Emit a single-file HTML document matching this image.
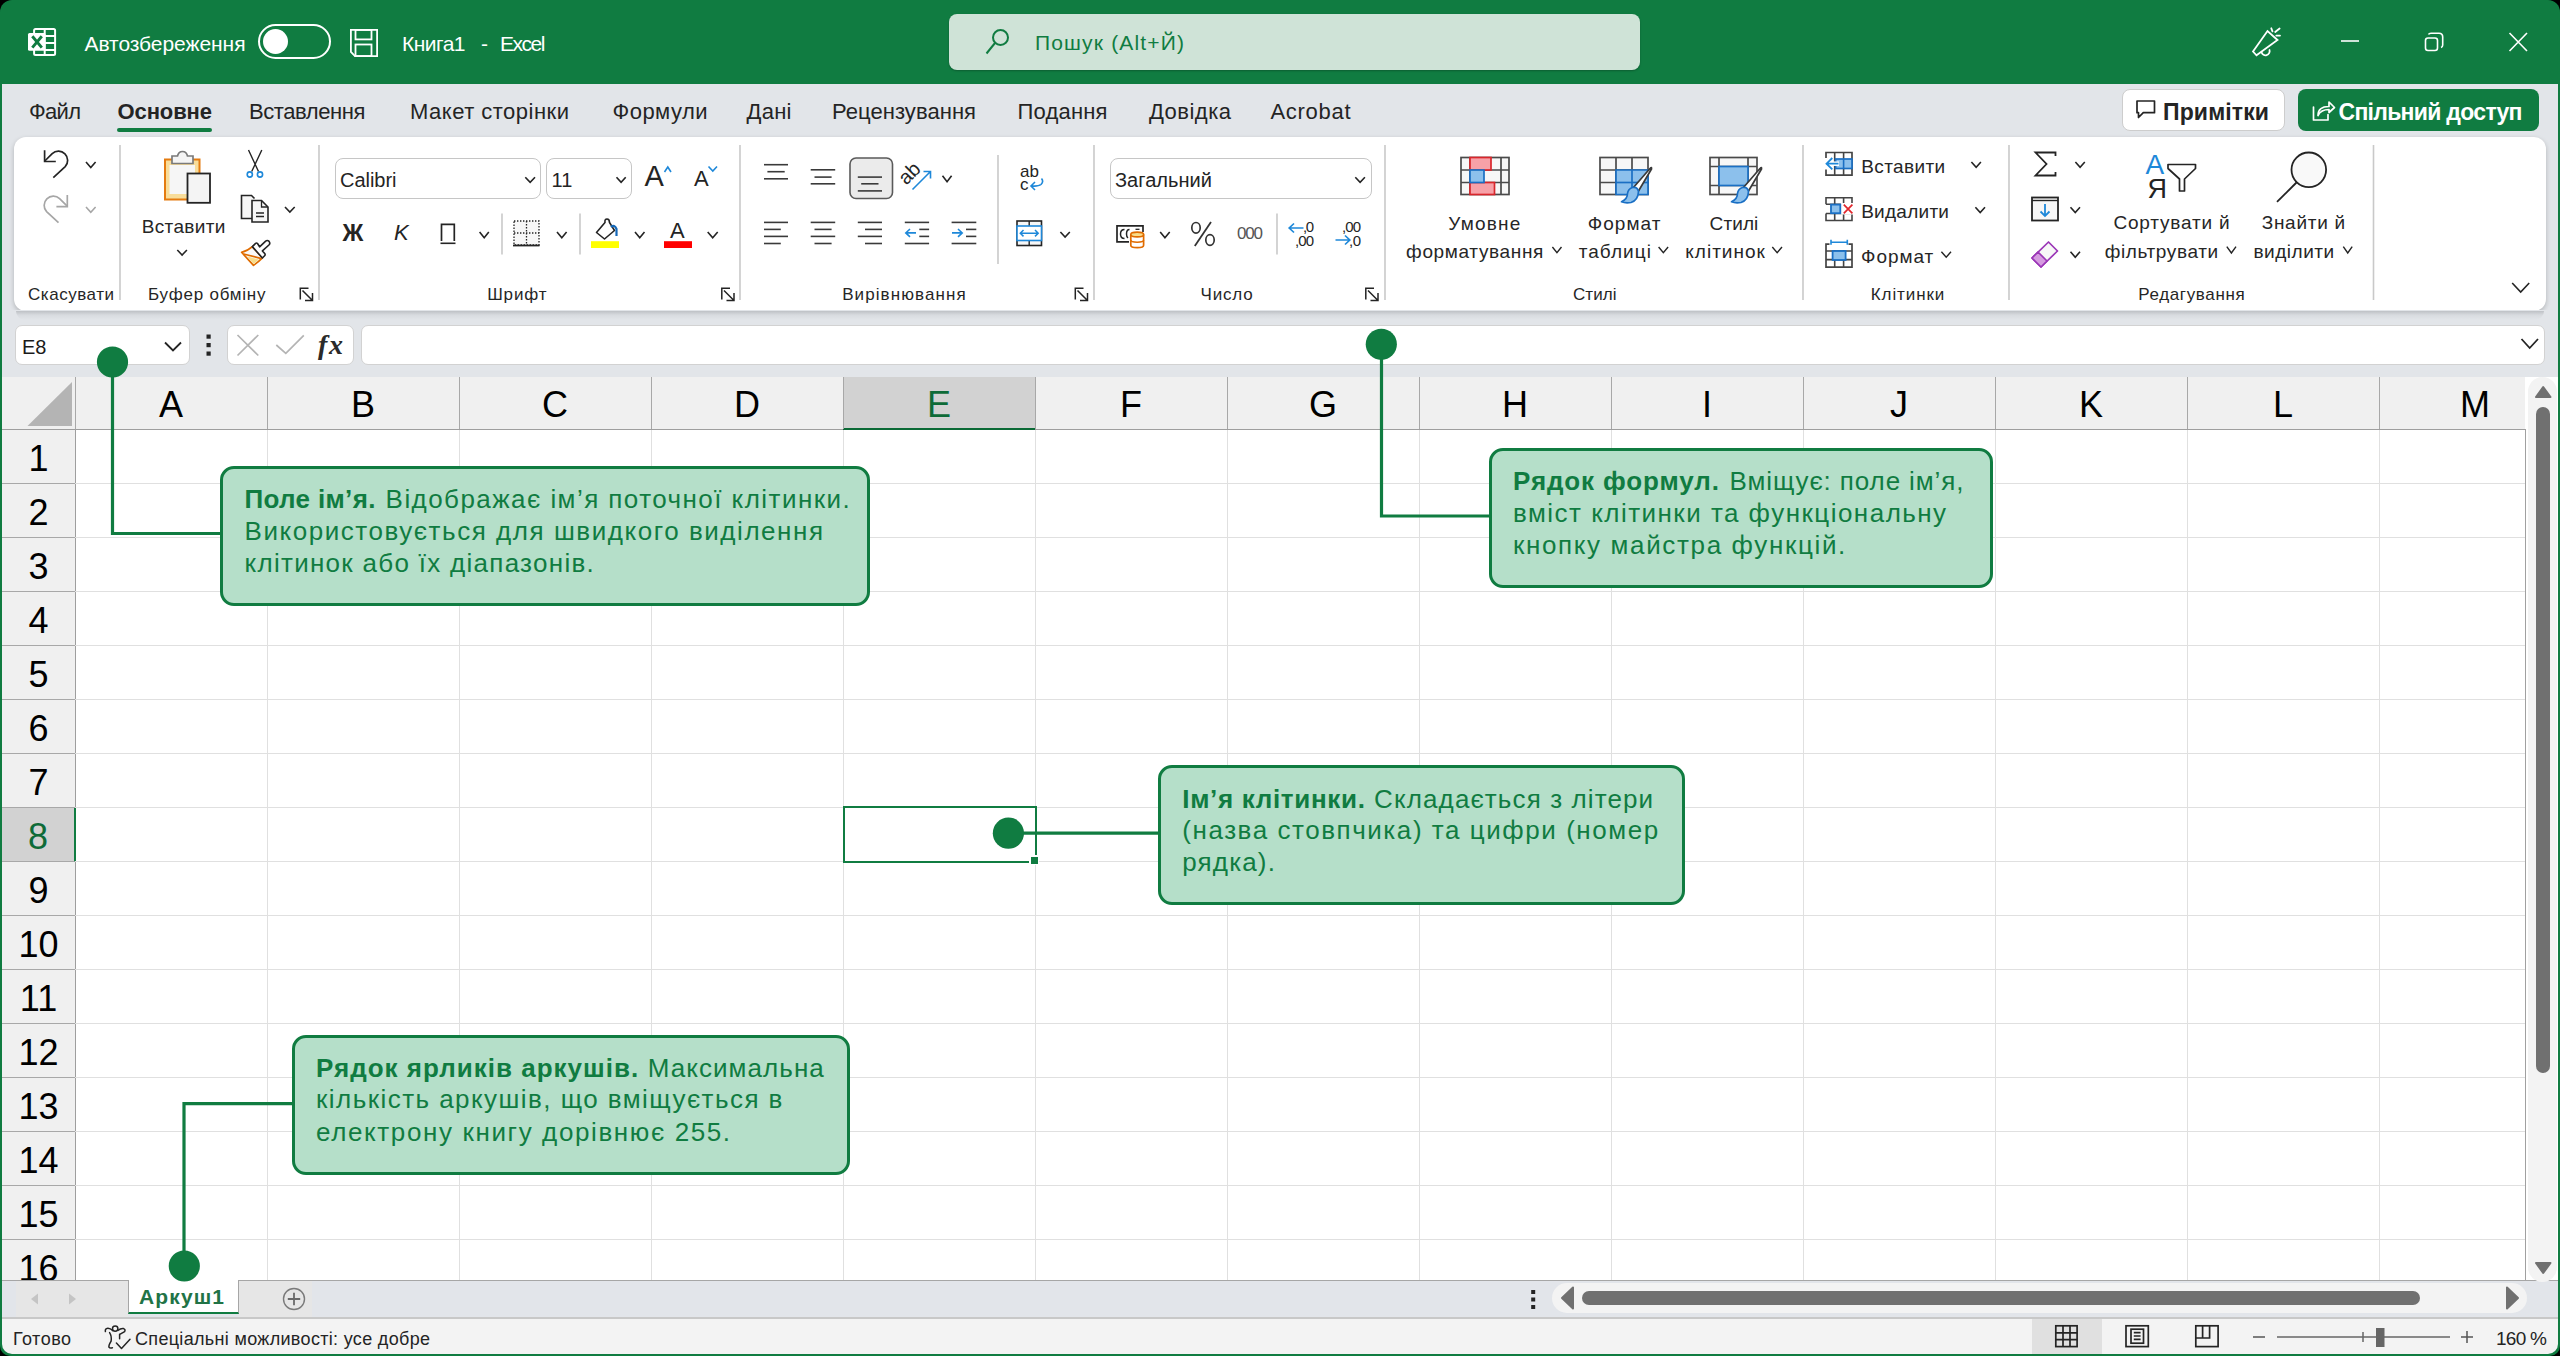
<!DOCTYPE html>
<html><head><meta charset="utf-8">
<style>
*{box-sizing:border-box;margin:0;padding:0}
html,body{width:2560px;height:1356px;overflow:hidden;background:#000;font-family:"Liberation Sans",sans-serif}
#win{position:absolute;left:0;top:0;width:2560px;height:1356px;background:#107C41;border-radius:12px 12px 10px 10px;overflow:hidden}
.a{position:absolute}
.t{position:absolute;white-space:nowrap;line-height:1}
svg{position:absolute;overflow:visible}
#tabbar{left:2px;top:84px;width:2556px;height:226px;background:#E2E5E9}
#ribbon{left:14px;top:137px;width:2532px;height:173.5px;background:#fff;border-radius:12px;box-shadow:0 2px 5px rgba(0,0,0,.22)}
#fbar{left:2px;top:310px;width:2556px;height:67px;background:#E2E5E9}
.box{position:absolute;background:#fff;border:1px solid #D2D2D2;border-radius:7px}
#grid{left:2px;top:377px;width:2556px;height:903px;background:#fff}
#sheetbar{left:2px;top:1280px;width:2556px;height:39px;background:#E2E5EA;border-top:1px solid #A6A6A6}
#status{left:2px;top:1317px;width:2556px;height:37px;background:#F3F3F3;border-top:2px solid #C8C8C8;border-radius:0 0 10px 10px}
.ch{position:absolute;top:377px;height:53px;background:#F0F0F0;border-bottom:1px solid #9E9E9E;font-size:36px;color:#000;text-align:center;line-height:56px}
.ch.sel{background:#D2D2D2;color:#0E6B38;border-bottom:2px solid #0B6A36}
.rh{position:absolute;left:2px;width:74px;height:54px;background:#F0F0F0;border-bottom:1px solid #A8A8A8;border-right:1px solid #9E9E9E;font-size:36px;color:#000;text-align:center;line-height:57px}
.rh.sel{background:#D2D2D2;color:#0E6B38;border-right:2px solid #107C41}
.vl{position:absolute;top:430px;width:1px;height:850px;background:#E0E0E0}
.vh{position:absolute;top:377px;width:1px;height:52px;background:#A8A8A8}
.hl{position:absolute;left:75px;height:1px;width:2450px;background:#E0E0E0}
.callout{position:absolute;background:#B5DFC9;border:3px solid #107C41;border-radius:13px;color:#107C41;font-size:24px;line-height:32px;padding:14px 0 0 21px}
.callout b{font-weight:bold}
.dot{position:absolute;width:31px;height:31px;border-radius:50%;background:#107C41}
.ln{position:absolute;background:#107C41}

</style></head><body>
<div id="win">
<svg style="left:0;top:0" width="1" height="1">
 <g fill="none" stroke="#fff" stroke-width="2">
  <rect x="34.1" y="28.9" width="21" height="26.2" rx="1.5"/>
  <line x1="44.7" y1="28.9" x2="44.7" y2="55.1"/>
  <line x1="44.7" y1="35.9" x2="55.1" y2="35.9"/>
  <line x1="44.7" y1="42.9" x2="55.1" y2="42.9"/>
  <line x1="44.7" y1="49.9" x2="55.1" y2="49.9"/>
 </g>
 <rect x="28" y="33" width="17.5" height="17.8" rx="1.5" fill="#fff"/>
 <path d="M32.3 36.3 L41.8 47.6 M41.8 36.3 L32.3 47.6" stroke="#107C41" stroke-width="2.9"/>
 <rect x="259" y="25" width="71" height="33" rx="16.5" fill="none" stroke="#fff" stroke-width="2"/>
 <circle cx="275.5" cy="41.5" r="12.5" fill="#fff"/>
 <g fill="none" stroke="#fff" stroke-width="1.8">
  <path d="M350.9 29.9 H377.1 V56.1 H355 L350.9 52 Z"/>
  <rect x="355.5" y="29.9" width="16" height="9.5"/>
  <rect x="355.5" y="44.5" width="16" height="11.6"/>
 </g>
 <g fill="none" stroke="#fff" stroke-width="1.8" stroke-linecap="round">
  <path d="M2253 51.5 L2267.5 31 L2277.5 40 L2256.5 55.3 Z"/>
  <path d="M2261.5 52.3 A4 4 0 0 0 2269.5 50"/>
  <path d="M2271.3 28.3 L2272.5 31.3 M2275.2 32 L2279.6 28.5 M2276.3 35.6 L2280 35.6"/>
 </g>
 <g fill="none" stroke="#fff" stroke-width="1.6">
  <line x1="2341" y1="41" x2="2359" y2="41"/>
  <rect x="2425.5" y="38" width="12" height="12.5" rx="2.5"/>
  <path d="M2428.5 34.5 Q2429 33.3 2431 33.3 H2439 Q2442.7 33.3 2442.7 37 V45 Q2442.7 47 2441 47.5"/>
  <path d="M2509.5 33 L2527 51 M2527 33 L2509.5 51"/>
 </g>
</svg>

<div class="t" style="left:84.5px;top:32.72px;font-size:21px;color:#fff;letter-spacing:-0.062px;">Автозбереження</div>
<div class="t" style="left:402px;top:32.72px;font-size:21px;color:#fff;letter-spacing:-0.525px;">Книга1</div>
<div class="t" style="left:481px;top:32.72px;font-size:21px;color:#fff;">-</div>
<div class="t" style="left:500px;top:32.72px;font-size:21px;color:#fff;letter-spacing:-1.465px;">Excel</div>
<div class="a" style="left:949px;top:14px;width:691px;height:56px;background:#CFE3D7;border-radius:8px;box-shadow:0 1px 2px rgba(0,0,0,.25)"></div>
<svg style="left:0;top:0" width="1" height="1">
 <g fill="none" stroke="#107C41" stroke-width="2">
  <circle cx="1000.5" cy="37.5" r="7.5"/>
  <line x1="995" y1="43" x2="986.5" y2="53.5"/>
 </g>
</svg>

<div class="t" style="left:1035px;top:32.22px;font-size:21px;color:#107C41;letter-spacing:1.167px;">Пошук (Alt+Й)</div>

<div id="tabbar" class="a"></div>
<div class="t" style="left:29px;top:101.38px;font-size:22px;color:#242424;letter-spacing:-0.698px;">Файл</div>
<div class="t" style="left:117.5px;top:101.38px;font-size:22px;color:#242424;letter-spacing:-0.104px;font-weight:bold;">Основне</div>
<div class="t" style="left:249px;top:101.38px;font-size:22px;color:#242424;letter-spacing:-0.413px;">Вставлення</div>
<div class="t" style="left:410px;top:101.38px;font-size:22px;color:#242424;letter-spacing:0.490px;">Макет сторінки</div>
<div class="t" style="left:612.5px;top:101.38px;font-size:22px;color:#242424;letter-spacing:0.464px;">Формули</div>
<div class="t" style="left:746.5px;top:101.38px;font-size:22px;color:#242424;letter-spacing:0.276px;">Дані</div>
<div class="t" style="left:832px;top:101.38px;font-size:22px;color:#242424;letter-spacing:0.053px;">Рецензування</div>
<div class="t" style="left:1017.5px;top:101.38px;font-size:22px;color:#242424;letter-spacing:0.190px;">Подання</div>
<div class="t" style="left:1149px;top:101.38px;font-size:22px;color:#242424;letter-spacing:0.477px;">Довідка</div>
<div class="t" style="left:1270.5px;top:101.38px;font-size:22px;color:#242424;letter-spacing:0.695px;">Acrobat</div>
<div class="a" style="left:117px;top:128px;width:95px;height:4px;border-radius:2px;background:#107C41"></div>
<div class="a" style="left:2122px;top:89px;width:163px;height:42px;background:#fff;border:1.5px solid #CDCDCD;border-radius:8px"></div>
<div class="a" style="left:2298px;top:89px;width:241px;height:42px;background:#107C41;border-radius:8px"></div>
<svg style="left:0;top:0" width="1" height="1"><g fill="none" stroke="#242424" stroke-width="1.7" stroke-linejoin="round">
<path d="M2137 101 H2154.5 V112.7 H2143.3 L2138.5 117.5 V112.7 H2137 Z"/></g>
<g fill="none" stroke="#fff" stroke-width="1.7" stroke-linejoin="round" stroke-linecap="round">
<path d="M2313.5 107 V120 H2328 V114.5"/><path d="M2318 115.5 Q2318 106.5 2329 106.5 V102 L2334.5 107.5 L2329 112.5 V109.5 Q2321 109.5 2318 115.5 Z"/></g></svg>
<div class="t" style="left:2163px;top:100.53px;font-size:23px;color:#242424;letter-spacing:0.136px;font-weight:bold;">Примітки</div>
<div class="t" style="left:2338.5px;top:100.53px;font-size:23px;color:#fff;letter-spacing:-0.705px;font-weight:bold;">Спільний доступ</div>
<div id="ribbon" class="a"></div>
<svg style="left:0;top:0" width="1" height="1">
<line x1="120" y1="145" x2="120" y2="300" stroke="#C9C9C9" stroke-width="1.6"/>
<line x1="319" y1="145" x2="319" y2="300" stroke="#C9C9C9" stroke-width="1.6"/>
<line x1="740" y1="145" x2="740" y2="300" stroke="#C9C9C9" stroke-width="1.6"/>
<line x1="1094" y1="145" x2="1094" y2="300" stroke="#C9C9C9" stroke-width="1.6"/>
<line x1="1385" y1="145" x2="1385" y2="300" stroke="#C9C9C9" stroke-width="1.6"/>
<line x1="1803" y1="145" x2="1803" y2="300" stroke="#C9C9C9" stroke-width="1.6"/>
<line x1="2009" y1="145" x2="2009" y2="300" stroke="#C9C9C9" stroke-width="1.6"/>
<line x1="2373.5" y1="145" x2="2373.5" y2="300" stroke="#C9C9C9" stroke-width="1.6"/>
<line x1="502" y1="213.5" x2="502" y2="254.5" stroke="#C9C9C9" stroke-width="1.6"/>
<line x1="580" y1="213.5" x2="580" y2="254.5" stroke="#C9C9C9" stroke-width="1.6"/>
<line x1="998" y1="155" x2="998" y2="264" stroke="#C9C9C9" stroke-width="1.6"/>
<line x1="1277" y1="213.5" x2="1277" y2="254.5" stroke="#C9C9C9" stroke-width="1.6"/>
<path d="M300.3 299.5 V288.3 H308.5" fill="none" stroke="#242424" stroke-width="1.5"/><path d="M302.5 290.5 L312.0 300.0 M312.5 293.0 V300.5 H305.0" fill="none" stroke="#242424" stroke-width="1.5"/>
<path d="M721.8 299.5 V288.3 H730" fill="none" stroke="#242424" stroke-width="1.5"/><path d="M724 290.5 L733.5 300.0 M734 293.0 V300.5 H726.5" fill="none" stroke="#242424" stroke-width="1.5"/>
<path d="M1075.3 299.5 V288.3 H1083.5" fill="none" stroke="#242424" stroke-width="1.5"/><path d="M1077.5 290.5 L1087.0 300.0 M1087.5 293.0 V300.5 H1080.0" fill="none" stroke="#242424" stroke-width="1.5"/>
<path d="M1365.8 299.5 V288.3 H1374" fill="none" stroke="#242424" stroke-width="1.5"/><path d="M1368 290.5 L1377.5 300.0 M1378 293.0 V300.5 H1370.5" fill="none" stroke="#242424" stroke-width="1.5"/>
<path d="M44.6 150.3 V161.5 H55.8" fill="none" stroke="#242424" stroke-width="1.7"/>
<path d="M44.8 161 L52.2 153.6 A9.2 9.2 0 0 1 65.2 166.6 L53.3 177.6" fill="none" stroke="#242424" stroke-width="1.7"/>
<path d="M86 162 L90.8 167.5 L95.6 162" fill="none" stroke="#242424" stroke-width="1.6"/>
<path d="M67.3 195.1 V206.6 H56.4" fill="none" stroke="#A6A6A6" stroke-width="1.7"/>
<path d="M67.2 206.2 L59.6 198.6 A9.2 9.2 0 0 0 46.6 211.6 L58.5 222.6" fill="none" stroke="#A6A6A6" stroke-width="1.7"/>
<path d="M86 207 L90.8 212.3 L95.6 207" fill="none" stroke="#A6A6A6" stroke-width="1.6"/>
<rect x="165" y="159.5" width="34.5" height="40" fill="#F8DD9A" stroke="#E47B10" stroke-width="2"/>
<rect x="169.5" y="165" width="25.5" height="29" fill="#F6F6F6"/>
<path d="M172 163.5 V156 H177.5 Q178.5 151.5 182.5 151.5 Q186.5 151.5 187.5 156 H193 V163.5 Z" fill="#F4F4F4" stroke="#7A7A7A" stroke-width="1.7"/>
<rect x="187.5" y="173.5" width="22.5" height="29.3" fill="#F4F4F4" stroke="#242424" stroke-width="1.8"/>
<path d="M177.3 250 L182.10000000000002 255 L186.9 250" fill="none" stroke="#242424" stroke-width="1.6"/>
<path d="M248.5 150 L258.5 171.5 M261.8 150 L251.7 171.5" fill="none" stroke="#242424" stroke-width="1.4"/>
<circle cx="249.8" cy="174.5" r="2.6" fill="none" stroke="#1E88D9" stroke-width="1.6"/><circle cx="260" cy="174.5" r="2.6" fill="none" stroke="#1E88D9" stroke-width="1.6"/>
<path d="M252 218.5 H241.5 V195.5 H251.5 L254.5 198.5" fill="#F6F6F6" stroke="#242424" stroke-width="1.6"/>
<path d="M252 200.5 H261.5 L268 207 V222 H252 Z" fill="#F6F6F6" stroke="#242424" stroke-width="1.6"/>
<path d="M261.5 200.5 V207 H268 M256 213 H264 M256 216.5 H264" fill="none" stroke="#242424" stroke-width="1.3"/>
<path d="M285 207 L289.85 212 L294.7 207" fill="none" stroke="#242424" stroke-width="1.6"/>
<path d="M252.3 246.6 Q247.5 251 241.6 252.3 L253.5 265.4 Q258.5 261.8 262.4 257.8 Z" fill="#F9F9F9" stroke="#E06C00" stroke-width="1.7" stroke-linejoin="round"/>
<path d="M247.3 256.6 L258.8 259.6 L253.6 264 Z" fill="#F8DD8A"/>
<path d="M243.6 254 L261.5 258.6" fill="none" stroke="#E06C00" stroke-width="1.7"/>
<path d="M252.3 246.6 L255.6 243.4 Q256.6 242.6 257.5 243.5 L259.6 246.8 L265.4 241.3 Q267.3 239.6 269.1 241.4 Q270.6 243.3 268.9 245 L262.4 250.9 L264.7 253.6 Q265.6 254.8 264.6 255.8 L262.4 258 Z" fill="#fff" stroke="#242424" stroke-width="1.6" stroke-linejoin="round"/>
</svg>
<div class="t" style="left:28px;top:285.91px;font-size:17px;color:#262626;letter-spacing:0.531px;">Скасувати</div>
<div class="t" style="left:148px;top:285.91px;font-size:17px;color:#262626;letter-spacing:0.783px;">Буфер обміну</div>
<div class="t" style="left:141.8px;top:216.62px;font-size:19px;color:#262626;letter-spacing:0.319px;">Вставити</div>
<div class="t" style="left:487.2px;top:285.91px;font-size:17px;color:#262626;letter-spacing:0.841px;">Шрифт</div>
<div class="t" style="left:842.2px;top:286.11px;font-size:17px;color:#262626;letter-spacing:1.089px;">Вирівнювання</div>
<div class="t" style="left:1200.5px;top:285.91px;font-size:17px;color:#262626;letter-spacing:0.848px;">Число</div>
<div class="t" style="left:1573px;top:285.91px;font-size:17px;color:#262626;letter-spacing:0.059px;">Стилі</div>
<div class="t" style="left:1870.8px;top:286.11px;font-size:17px;color:#262626;letter-spacing:0.900px;">Клітинки</div>
<div class="t" style="left:2138.2px;top:285.81px;font-size:17px;color:#262626;letter-spacing:0.647px;">Редагування</div>
<div class="a" style="left:335px;top:157.5px;width:206px;height:41px;border:1.6px solid #C6C6C6;border-radius:8px;background:#fff"></div>
<div class="a" style="left:546px;top:157.5px;width:86px;height:41px;border:1.6px solid #C6C6C6;border-radius:8px;background:#fff"></div>
<div class="a" style="left:1110px;top:157.5px;width:261.5px;height:41px;border:1.6px solid #C6C6C6;border-radius:8px;background:#fff"></div>
<div class="t" style="left:340px;top:169.97px;font-size:20px;color:#242424;letter-spacing:-0.031px;">Calibri</div>
<div class="t" style="left:551.5px;top:169.97px;font-size:20px;color:#242424;">11</div>
<div class="t" style="left:1115px;top:169.97px;font-size:20px;color:#242424;letter-spacing:0.041px;">Загальний</div>
<div class="t" style="left:644.5px;top:162.35px;font-size:29px;color:#242424;">A</div>
<div class="t" style="left:694px;top:168.28px;font-size:22px;color:#242424;">A</div>
<svg style="left:0;top:0" width="1" height="1">
<path d="M525.3 177.2 L530.15 182.4 L535 177.2" fill="none" stroke="#242424" stroke-width="1.6"/>
<path d="M616.5 177.2 L621.1 182.4 L625.7 177.2" fill="none" stroke="#242424" stroke-width="1.6"/>
<path d="M1355.3 177.2 L1360.1 182.3 L1364.9 177.2" fill="none" stroke="#242424" stroke-width="1.6"/>
<path d="M664.5 172 L667.8 167 L671 172" fill="none" stroke="#1E88D9" stroke-width="1.6"/>
<path d="M708.5 166.5 L712.8 171 L717 166.5" fill="none" stroke="#1E88D9" stroke-width="1.6"/>
<path d="M479.6 232 L484.20000000000005 237.8 L488.8 232" fill="none" stroke="#242424" stroke-width="1.6"/>
<path d="M557 232 L561.8 237.8 L566.6 232" fill="none" stroke="#242424" stroke-width="1.6"/>
<path d="M635 232 L639.75 237.8 L644.5 232" fill="none" stroke="#242424" stroke-width="1.6"/>
<path d="M707.7 232 L712.7 237.8 L717.7 232" fill="none" stroke="#242424" stroke-width="1.6"/>
<path d="M441.5 241 V224.3 H454.3 V241" fill="none" stroke="#242424" stroke-width="1.7"/>
<line x1="440.5" y1="243.3" x2="455.5" y2="243.3" stroke="#242424" stroke-width="1.6"/>
<rect x="514" y="221" width="25" height="24" fill="#F7F7F7" stroke="#242424" stroke-width="1.3" stroke-dasharray="1.4 1.6"/>
<path d="M526.5 221 V245 M514 233 H539" fill="none" stroke="#242424" stroke-width="1.3" stroke-dasharray="1.4 1.6"/>
<line x1="513" y1="245.5" x2="539.5" y2="245.5" stroke="#242424" stroke-width="1.8"/>
<path d="M596.5 232.5 L605 222.5 Q604.5 219 607 219 Q609.5 219 609.5 222.5 L614.5 230.5 L604.5 239 Z" fill="#fff" stroke="#242424" stroke-width="1.6" stroke-linejoin="round"/>
<path d="M611 227 Q614.5 224 616.5 229 V236" fill="none" stroke="#1568B8" stroke-width="2.2"/>
<rect x="591" y="241.2" width="28" height="6.8" fill="#FFFF00"/>
<rect x="664" y="241.2" width="28" height="6.8" fill="#FF0000"/>
<line x1="764" y1="164.7" x2="788" y2="164.7" stroke="#3A3A3A" stroke-width="1.6"/><line x1="767.4" y1="171.7" x2="784.7" y2="171.7" stroke="#3A3A3A" stroke-width="1.6"/><line x1="764" y1="178.8" x2="788" y2="178.8" stroke="#3A3A3A" stroke-width="1.6"/>
<line x1="810.7" y1="169.8" x2="835.2" y2="169.8" stroke="#3A3A3A" stroke-width="1.6"/><line x1="814.5" y1="177.1" x2="831.6" y2="177.1" stroke="#3A3A3A" stroke-width="1.6"/><line x1="810.7" y1="183.8" x2="835.2" y2="183.8" stroke="#3A3A3A" stroke-width="1.6"/>
<rect x="850" y="158" width="42.5" height="40.5" rx="6" fill="#EBEBEB" stroke="#5A5A5A" stroke-width="1.6"/>
<line x1="857.8" y1="177.1" x2="882" y2="177.1" stroke="#3A3A3A" stroke-width="1.6"/><line x1="861.2" y1="183.8" x2="878.5" y2="183.8" stroke="#3A3A3A" stroke-width="1.6"/><line x1="857.8" y1="190.9" x2="882" y2="190.9" stroke="#3A3A3A" stroke-width="1.6"/>
<line x1="764" y1="222.4" x2="788" y2="222.4" stroke="#3A3A3A" stroke-width="1.6"/><line x1="764" y1="229.4" x2="780.8" y2="229.4" stroke="#3A3A3A" stroke-width="1.6"/><line x1="764" y1="236.4" x2="788" y2="236.4" stroke="#3A3A3A" stroke-width="1.6"/><line x1="764" y1="243.5" x2="780.8" y2="243.5" stroke="#3A3A3A" stroke-width="1.6"/>
<line x1="810.7" y1="222.4" x2="835.2" y2="222.4" stroke="#3A3A3A" stroke-width="1.6"/><line x1="814.5" y1="229.4" x2="831.6" y2="229.4" stroke="#3A3A3A" stroke-width="1.6"/><line x1="810.7" y1="236.4" x2="835.2" y2="236.4" stroke="#3A3A3A" stroke-width="1.6"/><line x1="814.5" y1="243.5" x2="831.6" y2="243.5" stroke="#3A3A3A" stroke-width="1.6"/>
<line x1="857.8" y1="222.4" x2="882" y2="222.4" stroke="#3A3A3A" stroke-width="1.6"/><line x1="865" y1="229.4" x2="882" y2="229.4" stroke="#3A3A3A" stroke-width="1.6"/><line x1="857.8" y1="236.4" x2="882" y2="236.4" stroke="#3A3A3A" stroke-width="1.6"/><line x1="865" y1="243.5" x2="882" y2="243.5" stroke="#3A3A3A" stroke-width="1.6"/>
<line x1="904.8" y1="222.4" x2="929.1" y2="222.4" stroke="#3A3A3A" stroke-width="1.6"/><line x1="919.3" y1="229.4" x2="929.1" y2="229.4" stroke="#3A3A3A" stroke-width="1.6"/><line x1="919.3" y1="236.4" x2="929.1" y2="236.4" stroke="#3A3A3A" stroke-width="1.6"/><line x1="904.8" y1="243.5" x2="929.1" y2="243.5" stroke="#3A3A3A" stroke-width="1.6"/>
<line x1="951.6" y1="222.4" x2="976.3" y2="222.4" stroke="#3A3A3A" stroke-width="1.6"/><line x1="966" y1="229.4" x2="976.3" y2="229.4" stroke="#3A3A3A" stroke-width="1.6"/><line x1="966" y1="236.4" x2="976.3" y2="236.4" stroke="#3A3A3A" stroke-width="1.6"/><line x1="951.6" y1="243.5" x2="976.3" y2="243.5" stroke="#3A3A3A" stroke-width="1.6"/>
<path d="M916 232.9 H906 M910 229 L905.8 232.9 L910 236.8" fill="none" stroke="#1E88D9" stroke-width="1.6"/>
<path d="M952 232.9 H962 M958 229 L962.2 232.9 L958 236.8" fill="none" stroke="#1E88D9" stroke-width="1.6"/>
<path d="M912.5 189.5 L930.5 171.5 M923.5 171.5 H930.5 V178.5" fill="none" stroke="#1E88D9" stroke-width="1.6"/>
<path d="M942.5 175.7 L947.05 181.7 L951.6 175.7" fill="none" stroke="#242424" stroke-width="1.6"/>
<path d="M1041.5 178.5 Q1044 181.5 1041 184.5 Q1038.5 186.5 1031.5 186 M1035 182 L1031 186 L1035 190" fill="none" stroke="#1E88D9" stroke-width="1.6"/>
<rect x="1017" y="221" width="24.5" height="24.5" fill="#F7F7F7" stroke="#242424" stroke-width="1.6"/>
<line x1="1029.2" y1="221" x2="1029.2" y2="245.5" stroke="#242424" stroke-width="1.4"/>
<rect x="1017" y="226" width="24.5" height="14.5" fill="#fff" stroke="#1E88D9" stroke-width="1.6"/>
<path d="M1020.5 233.2 H1038 M1023.5 230 L1020.3 233.2 L1023.5 236.4 M1035 230 L1038.2 233.2 L1035 236.4" fill="none" stroke="#1E88D9" stroke-width="1.5"/>
<path d="M1060.4 232 L1065.1 237.1 L1069.8 232" fill="none" stroke="#242424" stroke-width="1.6"/>
</svg>
<div class="t" style="left:342.5px;top:221.53px;font-size:23px;color:#242424;font-weight:bold;">Ж</div>
<div class="t" style="left:394px;top:222.38px;font-size:22px;color:#242424;font-style:italic;">K</div>
<div class="t" style="left:670px;top:220.38px;font-size:22px;color:#242424;">A</div>
<div class="t" style="left:898px;top:163px;font-size:20px;color:#242424;transform:rotate(-45deg);transform-origin:50% 50%">ab</div>
<div class="t" style="left:1020px;top:162.61px;font-size:17px;color:#242424;">ab</div>
<div class="t" style="left:1020px;top:175.61px;font-size:17px;color:#242424;">c</div>
<svg style="left:0;top:0" width="1" height="1">
<path d="M1129 241.8 H1117 V225.9 H1143 V232" fill="none" stroke="#242424" stroke-width="1.7"/>
<path d="M1124.5 229.5 Q1120.5 229.5 1120.5 234 Q1120.5 238.5 1124.5 238.5 M1129.5 229.5 Q1126.5 229.5 1126.5 234 Q1126.5 237 1128 238" fill="none" stroke="#242424" stroke-width="1.5"/>
<path d="M1135.5 229.3 H1139.5" fill="none" stroke="#242424" stroke-width="1.3"/>
<path d="M1130.8 234.5 V245.2 Q1130.8 247.6 1137.3 247.6 Q1143.6 247.6 1143.6 245.2 V234.5" fill="#fff" stroke="#E06C00" stroke-width="1.7"/>
<ellipse cx="1137.2" cy="234.5" rx="6.4" ry="2.4" fill="#F8DD8A" stroke="#E06C00" stroke-width="1.7"/>
<path d="M1130.8 240 Q1130.8 242.2 1137.2 242.2 Q1143.6 242.2 1143.6 240" fill="none" stroke="#E06C00" stroke-width="1.5"/>
<path d="M1160.2 232 L1164.95 237.8 L1169.7 232" fill="none" stroke="#242424" stroke-width="1.6"/>
<line x1="1211" y1="222" x2="1194.8" y2="245.9" stroke="#333" stroke-width="1.8"/>
<ellipse cx="1196" cy="227.8" rx="4.2" ry="5.3" fill="none" stroke="#333" stroke-width="1.7"/><ellipse cx="1210" cy="240" rx="4.2" ry="5.3" fill="none" stroke="#333" stroke-width="1.7"/>
<path d="M1303.5 228 H1289.5 M1294 223.5 L1289.2 228 L1294 232.5" fill="none" stroke="#1E88D9" stroke-width="1.7"/>
<path d="M1335.5 240 H1349.5 M1345 235.5 L1349.8 240 L1345 244.5" fill="none" stroke="#1E88D9" stroke-width="1.7"/>
<rect x="1461" y="157.5" width="48" height="37.0" fill="#F7F7F7" stroke="#4A4A4A" stroke-width="1.7"/><line x1="1470" y1="157.5" x2="1470" y2="194.5" stroke="#4A4A4A" stroke-width="1.7"/><line x1="1501" y1="157.5" x2="1501" y2="194.5" stroke="#4A4A4A" stroke-width="1.7"/><line x1="1461" y1="170" x2="1509" y2="170" stroke="#4A4A4A" stroke-width="1.7"/><line x1="1461" y1="182.5" x2="1509" y2="182.5" stroke="#4A4A4A" stroke-width="1.7"/>
<rect x="1470" y="157.5" width="21" height="12.5" fill="#F7A1A8" stroke="#D9262C" stroke-width="1.7"/>
<rect x="1470" y="182.5" width="24.5" height="12" fill="#F7A1A8" stroke="#D9262C" stroke-width="1.7"/>
<rect x="1470" y="170" width="14" height="12.5" fill="#8CC0EC" stroke="#1A6FC4" stroke-width="1.7"/>
<rect x="1600" y="157.5" width="48" height="37.0" fill="#F7F7F7" stroke="#4A4A4A" stroke-width="1.7"/><line x1="1616" y1="157.5" x2="1616" y2="194.5" stroke="#4A4A4A" stroke-width="1.7"/><line x1="1632" y1="157.5" x2="1632" y2="194.5" stroke="#4A4A4A" stroke-width="1.7"/><line x1="1600" y1="170" x2="1648" y2="170" stroke="#4A4A4A" stroke-width="1.7"/><line x1="1600" y1="182.5" x2="1648" y2="182.5" stroke="#4A4A4A" stroke-width="1.7"/>
<path d="M1616 170 H1648 V194.5 H1616 Z" fill="#8CC0EC" stroke="#1A6FC4" stroke-width="1.7"/>
<line x1="1632" y1="170" x2="1632" y2="194.5" stroke="#1A6FC4" stroke-width="1.7"/><line x1="1616" y1="182.5" x2="1648" y2="182.5" stroke="#1A6FC4" stroke-width="1.7"/>
<path d="M1633 188 L1650 168.5 Q1652 166.5 1651.5 169 L1638.5 191" fill="#fff" stroke="#3A3A3A" stroke-width="1.7" stroke-linejoin="round"/>
<path d="M1632.5 187.5 Q1637.5 186.5 1638.5 191.5 Q1638 200.5 1631 202.5 Q1625.5 203.5 1621.5 201.8 Q1627.5 199 1627.5 193.5 Q1628 189 1632.5 187.5 Z" fill="#8CC0EC" stroke="#1A6FC4" stroke-width="1.7" stroke-linejoin="round"/>
<rect x="1710" y="157.5" width="47" height="37.0" fill="#F7F7F7" stroke="#4A4A4A" stroke-width="1.7"/><line x1="1719" y1="157.5" x2="1719" y2="194.5" stroke="#4A4A4A" stroke-width="1.7"/><line x1="1748" y1="157.5" x2="1748" y2="194.5" stroke="#4A4A4A" stroke-width="1.7"/><line x1="1710" y1="166.5" x2="1757" y2="166.5" stroke="#4A4A4A" stroke-width="1.7"/><line x1="1710" y1="185.5" x2="1757" y2="185.5" stroke="#4A4A4A" stroke-width="1.7"/>
<rect x="1719" y="166.5" width="29" height="19" fill="#8CC0EC" stroke="#1A6FC4" stroke-width="1.7"/>
<path d="M1743 188 L1760 168.5 Q1762 166.5 1761.5 169 L1748.5 191" fill="#fff" stroke="#3A3A3A" stroke-width="1.7" stroke-linejoin="round"/>
<path d="M1742.5 187.5 Q1747.5 186.5 1748.5 191.5 Q1748 200.5 1741 202.5 Q1735.5 203.5 1731.5 201.8 Q1737.5 199 1737.5 193.5 Q1738 189 1742.5 187.5 Z" fill="#8CC0EC" stroke="#1A6FC4" stroke-width="1.7" stroke-linejoin="round"/>
<path d="M1552.4 247 L1556.95 252.7 L1561.5 247" fill="none" stroke="#242424" stroke-width="1.4"/>
<path d="M1658.6 247 L1663.35 252.7 L1668.1 247" fill="none" stroke="#242424" stroke-width="1.4"/>
<path d="M1772.3 247 L1777.15 252.7 L1782 247" fill="none" stroke="#242424" stroke-width="1.4"/>
<path d="M1826 158 V152.5 H1852 V175.2 H1826 V169.5" fill="none" stroke="#444" stroke-width="1.7"/>
<path d="M1834.7 152.5 V175.2 M1843.6 152.5 V175.2" fill="none" stroke="#444" stroke-width="1.6"/>
<rect x="1828" y="175.2" width="0" height="0"/>
<rect x="1835.6" y="159" width="16.4" height="9.5" fill="#8CC0EC" stroke="#1A6FC4" stroke-width="1.7"/>
<line x1="1843.6" y1="159" x2="1843.6" y2="168.5" stroke="#1A6FC4" stroke-width="1.6"/>
<path d="M1825 163.7 H1839" stroke="#fff" stroke-width="4.5"/>
<path d="M1838.5 163.7 H1826.8 M1832.3 158 L1826.5 163.7 L1832.3 169.4" fill="none" stroke="#1E88D9" stroke-width="1.8"/>
<path d="M1826 204.3 V197.7 H1852 V204.3 M1826 213.5 V220.5 H1852 V213.5 M1834.7 197.7 V204.3 M1843.6 197.7 V204.3 M1834.7 213.5 V220.5 M1843.6 213.5 V220.5 M1826 204.3 H1831 M1826 213.5 H1831 M1826 204.3 H1852 M1826 213.5 H1852" fill="none" stroke="#444" stroke-width="1.6"/>
<rect x="1840.8" y="203" width="13" height="11.5" fill="#fff"/>
<rect x="1831" y="204.6" width="9.3" height="8.6" fill="#8CC0EC" stroke="#1A6FC4" stroke-width="1.8"/>
<path d="M1843.8 204.6 L1852.4 213.3 M1852.4 204.6 L1843.8 213.3" stroke="#E0262C" stroke-width="1.7"/>
<path d="M1829.5 244.2 H1826 V267.2 H1852 V244.2 H1848.5" fill="none" stroke="#444" stroke-width="1.7"/>
<path d="M1834.7 250 V267.2 M1843.6 250 V267.2 M1826 251 H1852 M1826 259.6 H1852" fill="none" stroke="#444" stroke-width="1.6"/>
<rect x="1832.6" y="251" width="13" height="9" fill="#8CC0EC" stroke="#1A6FC4" stroke-width="1.8"/>
<path d="M1831 242.3 H1847.3 M1831 239.8 V244.8 M1847.3 239.8 V244.8" fill="none" stroke="#1E88D9" stroke-width="1.6"/>
<path d="M1971.4 162 L1976.15 167.2 L1980.9 162" fill="none" stroke="#242424" stroke-width="1.6"/>
<path d="M1975.4 207.2 L1980.2 212.5 L1985 207.2" fill="none" stroke="#242424" stroke-width="1.6"/>
<path d="M1941.4 251.8 L1946.2 257.2 L1951 251.8" fill="none" stroke="#242424" stroke-width="1.4"/>
<path d="M2055.5 156 V152.5 H2035.5 L2046.5 164 L2035.5 175.5 H2055.5 V172" fill="none" stroke="#242424" stroke-width="1.8"/>
<rect x="2032" y="197.5" width="26" height="23" fill="#F7F7F7" stroke="#242424" stroke-width="1.8"/>
<line x1="2032" y1="200.5" x2="2058" y2="200.5" stroke="#242424" stroke-width="1.4"/>
<path d="M2045 204 V216 M2040.5 211.5 L2045 216 L2049.5 211.5" fill="none" stroke="#1E88D9" stroke-width="1.8"/>
<path d="M2032 258 L2048.5 242 L2057.5 251 L2041 267 Z" fill="#F7F7F7" stroke="#9B36B7" stroke-width="1.7" stroke-linejoin="round"/>
<path d="M2032 258 L2038 252 L2047 261 L2041 267 Z" fill="#D59BE0" stroke="#9B36B7" stroke-width="1.7" stroke-linejoin="round"/>
<path d="M2075.4 162 L2080.1000000000004 167.2 L2084.8 162" fill="none" stroke="#242424" stroke-width="1.6"/>
<path d="M2070.5 207.2 L2075.25 212.5 L2080 207.2" fill="none" stroke="#242424" stroke-width="1.6"/>
<path d="M2070.5 251.8 L2075.25 257.2 L2080 251.8" fill="none" stroke="#242424" stroke-width="1.6"/>
<path d="M2168 164.5 H2195.5 V168.5 L2184.5 179 V191 H2179.5 V179 L2168 168.5 Z" fill="#fff" stroke="#242424" stroke-width="1.7" stroke-linejoin="round"/>
<path d="M2226.8 246.6 L2231.4 253 L2236 246.6" fill="none" stroke="#242424" stroke-width="1.4"/>
<circle cx="2308.8" cy="169.8" r="17.3" fill="#F9F9F9" stroke="#242424" stroke-width="1.8"/>
<line x1="2296.5" y1="182.5" x2="2277" y2="201.8" stroke="#242424" stroke-width="1.8"/>
<path d="M2343.3 246.6 L2347.75 253 L2352.2 246.6" fill="none" stroke="#242424" stroke-width="1.4"/>
<path d="M2512.2 283 L2520.7 292.1 L2529.2 283" fill="none" stroke="#242424" stroke-width="1.6"/>
</svg>
<div class="t" style="left:1237px;top:225.31px;font-size:17px;color:#555;letter-spacing:-1.188px;">000</div>
<div class="t" style="left:1303px;top:218.70px;font-size:15px;color:#242424;letter-spacing:-1.516px;">,0</div>
<div class="t" style="left:1295px;top:233.30px;font-size:15px;color:#242424;letter-spacing:-0.930px;">,00</div>
<div class="t" style="left:1342px;top:218.70px;font-size:15px;color:#242424;letter-spacing:-0.930px;">,00</div>
<div class="t" style="left:1349px;top:233.30px;font-size:15px;color:#242424;letter-spacing:-0.516px;">,0</div>
<div class="t" style="left:1448.2px;top:213.62px;font-size:19px;color:#262626;letter-spacing:1.240px;">Умовне</div>
<div class="t" style="left:1406.1px;top:241.52px;font-size:19px;color:#262626;letter-spacing:0.652px;">форматування</div>
<div class="t" style="left:1587.7px;top:213.62px;font-size:19px;color:#262626;letter-spacing:1.040px;">Формат</div>
<div class="t" style="left:1578.7px;top:241.52px;font-size:19px;color:#262626;letter-spacing:1.052px;">таблиці</div>
<div class="t" style="left:1709.6px;top:213.62px;font-size:19px;color:#262626;letter-spacing:0.085px;">Стилі</div>
<div class="t" style="left:1685.3px;top:241.52px;font-size:19px;color:#262626;letter-spacing:1.010px;">клітинок</div>
<div class="t" style="left:1861.2px;top:157.02px;font-size:19px;color:#262626;letter-spacing:0.391px;">Вставити</div>
<div class="t" style="left:1861.2px;top:201.72px;font-size:19px;color:#262626;letter-spacing:0.262px;">Видалити</div>
<div class="t" style="left:1861px;top:246.62px;font-size:19px;color:#262626;letter-spacing:0.960px;">Формат</div>
<div class="t" style="left:2113.5px;top:213.22px;font-size:19px;color:#262626;letter-spacing:0.791px;">Сортувати й</div>
<div class="t" style="left:2104.7px;top:241.52px;font-size:19px;color:#262626;letter-spacing:0.613px;">фільтрувати</div>
<div class="t" style="left:2261.7px;top:213.22px;font-size:19px;color:#262626;letter-spacing:0.734px;">Знайти й</div>
<div class="t" style="left:2253.4px;top:241.52px;font-size:19px;color:#262626;letter-spacing:0.538px;">виділити</div>
<div class="t" style="left:2145.5px;top:150.60px;font-size:28px;color:#1E88D9;">A</div>
<div class="t" style="left:2147.5px;top:176.14px;font-size:27px;color:#242424;">Я</div>
<div id="fbar" class="a"></div>
<div class="a" style="left:16px;top:310.5px;width:2528px;height:9px;background:linear-gradient(rgba(60,64,70,.22),rgba(60,64,70,.06) 45%,rgba(60,64,70,0));border-radius:0 0 10px 10px"></div>
<div class="box" style="left:15px;top:325px;width:175px;height:39.5px"></div>
<div class="box" style="left:227px;top:325px;width:126.5px;height:39.5px"></div>
<div class="box" style="left:360.8px;top:325px;width:2184.7px;height:39.5px"></div>
<div class="t" style="left:22px;top:336.87px;font-size:20px;color:#1A1A1A;">E8</div>
<svg style="left:0;top:0" width="1" height="1">
<path d="M165 342.5 L173 350.5 L181 342.5" fill="none" stroke="#242424" stroke-width="1.8"/>
<path d="M2521.5 339 L2529.7 348 L2538 339" fill="none" stroke="#242424" stroke-width="1.8"/>
<rect x="206.5" y="334.5" width="4.2" height="4.2" fill="#242424"/>
<rect x="206.5" y="343" width="4.2" height="4.2" fill="#242424"/>
<rect x="206.5" y="351.5" width="4.2" height="4.2" fill="#242424"/>
<path d="M237.5 335 L258.3 355.5 M258.3 335 L237.5 355.5" stroke="#B4B4B4" stroke-width="1.7"/>
<path d="M276.3 345 L285.8 353.3 L303.8 335.3" fill="none" stroke="#B4B4B4" stroke-width="1.7"/>
</svg>
<div class="t" style="left:318px;top:330.55px;font-size:28px;color:#2A2A2A;letter-spacing:1.672px;font-weight:bold;font-style:italic;font-family:'Liberation Serif';">fx</div>
<div id="grid" class="a"></div>
<div class="ch" style="left:75px;width:192px">A</div>
<div class="ch" style="left:267px;width:192px">B</div>
<div class="ch" style="left:459px;width:192px">C</div>
<div class="ch" style="left:651px;width:192px">D</div>
<div class="ch sel" style="left:843px;width:192px">E</div>
<div class="ch" style="left:1035px;width:192px">F</div>
<div class="ch" style="left:1227px;width:192px">G</div>
<div class="ch" style="left:1419px;width:192px">H</div>
<div class="ch" style="left:1611px;width:192px">I</div>
<div class="ch" style="left:1803px;width:192px">J</div>
<div class="ch" style="left:1995px;width:192px">K</div>
<div class="ch" style="left:2187px;width:192px">L</div>
<div class="ch" style="left:2379px;width:146px;text-indent:46px">M</div>
<div class="rh" style="top:430px">1</div>
<div class="rh" style="top:484px">2</div>
<div class="rh" style="top:538px">3</div>
<div class="rh" style="top:592px">4</div>
<div class="rh" style="top:646px">5</div>
<div class="rh" style="top:700px">6</div>
<div class="rh" style="top:754px">7</div>
<div class="rh sel" style="top:808px">8</div>
<div class="rh" style="top:862px">9</div>
<div class="rh" style="top:916px">10</div>
<div class="rh" style="top:970px">11</div>
<div class="rh" style="top:1024px">12</div>
<div class="rh" style="top:1078px">13</div>
<div class="rh" style="top:1132px">14</div>
<div class="rh" style="top:1186px">15</div>
<div class="rh" style="top:1240px">16</div>
<div class="vl" style="left:267px"></div>
<div class="vh" style="left:267px"></div>
<div class="vl" style="left:459px"></div>
<div class="vh" style="left:459px"></div>
<div class="vl" style="left:651px"></div>
<div class="vh" style="left:651px"></div>
<div class="vl" style="left:843px"></div>
<div class="vh" style="left:843px"></div>
<div class="vl" style="left:1035px"></div>
<div class="vh" style="left:1035px"></div>
<div class="vl" style="left:1227px"></div>
<div class="vh" style="left:1227px"></div>
<div class="vl" style="left:1419px"></div>
<div class="vh" style="left:1419px"></div>
<div class="vl" style="left:1611px"></div>
<div class="vh" style="left:1611px"></div>
<div class="vl" style="left:1803px"></div>
<div class="vh" style="left:1803px"></div>
<div class="vl" style="left:1995px"></div>
<div class="vh" style="left:1995px"></div>
<div class="vl" style="left:2187px"></div>
<div class="vh" style="left:2187px"></div>
<div class="vl" style="left:2379px"></div>
<div class="vh" style="left:2379px"></div>
<div class="hl" style="top:483px"></div>
<div class="hl" style="top:537px"></div>
<div class="hl" style="top:591px"></div>
<div class="hl" style="top:645px"></div>
<div class="hl" style="top:699px"></div>
<div class="hl" style="top:753px"></div>
<div class="hl" style="top:807px"></div>
<div class="hl" style="top:861px"></div>
<div class="hl" style="top:915px"></div>
<div class="hl" style="top:969px"></div>
<div class="hl" style="top:1023px"></div>
<div class="hl" style="top:1077px"></div>
<div class="hl" style="top:1131px"></div>
<div class="hl" style="top:1185px"></div>
<div class="hl" style="top:1239px"></div>
<div class="hl" style="top:1293px"></div>
<div class="a" style="left:2px;top:377px;width:74px;height:53px;background:#F0F0F0;border-right:1px solid #A8A8A8;border-bottom:1px solid #9E9E9E"></div>
<svg style="left:0;top:0" width="1" height="1"><polygon points="27.5,426 72,426 72,382" fill="#B4B4B4"/></svg>
<div class="a" style="left:2525px;top:429px;width:1px;height:851px;background:#A0A0A0"></div>
<div class="a" style="left:842.5px;top:806px;width:194px;height:56.5px;border:2px solid #107C41"></div>
<div class="a" style="left:1028.5px;top:855px;width:10px;height:10px;background:#fff"></div>
<div class="a" style="left:1030.5px;top:857px;width:7px;height:7px;background:#107C41"></div>
<div id="sheetbar" class="a"></div>
<div id="status" class="a"></div>
<div class="a" style="left:16px;top:1281px;width:111.5px;height:36px;background:#E6E6E6"></div>
<div class="a" style="left:238.5px;top:1281px;width:73.5px;height:36px;background:#E6E6E6"></div>
<div class="a" style="left:127.5px;top:1280px;width:111px;height:34px;background:#fff;border:1px solid #A6A6A6;border-top:none;border-bottom:2px solid #107C41"></div>
<div class="t" style="left:139px;top:1286.22px;font-size:21px;color:#217346;letter-spacing:1.125px;font-weight:bold;">Аркуш1</div>
<svg style="left:0;top:0" width="1" height="1">
<path d="M38 1293.5 L31 1299 L38 1304.5 Z" fill="#C4C4C4"/>
<path d="M69 1293.5 L76 1299 L69 1304.5 Z" fill="#C4C4C4"/>
<circle cx="294" cy="1299" r="10.5" fill="none" stroke="#7A7A7A" stroke-width="1.4"/>
<path d="M294 1292.8 V1305.2 M287.8 1299 H300.2" stroke="#6A6A6A" stroke-width="1.8"/>
<rect x="1531.2" y="1290" width="4" height="4" fill="#242424"/>
<rect x="1531.2" y="1297.5" width="4" height="4" fill="#242424"/>
<rect x="1531.2" y="1305" width="4" height="4" fill="#242424"/>
</svg>
<div class="a" style="left:1552px;top:1283px;width:975px;height:30px;background:#F3F3F3;border-radius:15px"></div>
<div class="a" style="left:1581.5px;top:1291px;width:838.5px;height:14px;background:#707070;border-radius:7px"></div>
<div class="a" style="left:2528px;top:377px;width:29px;height:905px;background:#F3F3F3;border-radius:15px"></div>
<div class="a" style="left:2535.8px;top:407px;width:14.4px;height:665.5px;background:#707070;border-radius:7px"></div>
<svg style="left:0;top:0" width="1" height="1">
<path d="M1573 1287.5 V1308.5 L1562 1298 Z" fill="#707070" stroke="#707070" stroke-width="2" stroke-linejoin="round"/>
<path d="M2507 1287.5 V1308.5 L2518 1298 Z" fill="#707070" stroke="#707070" stroke-width="2" stroke-linejoin="round"/>
<path d="M2536 397 H2550.5 L2543.2 387 Z" fill="#707070" stroke="#707070" stroke-width="2" stroke-linejoin="round"/>
<path d="M2536 1263 H2550.5 L2543.2 1273 Z" fill="#707070" stroke="#707070" stroke-width="2" stroke-linejoin="round"/>
</svg>
<div class="t" style="left:13px;top:1330.36px;font-size:18px;color:#242424;letter-spacing:0.481px;">Готово</div>
<div class="t" style="left:135px;top:1330.36px;font-size:18px;color:#242424;letter-spacing:0.324px;">Спеціальні можливості: усе добре</div>
<svg style="left:0;top:0" width="1" height="1">
<g fill="none" stroke="#242424" stroke-width="1.5" stroke-linecap="round" stroke-linejoin="round">
<circle cx="115.2" cy="1328.6" r="2.7"/>
<path d="M105.4 1331.6 Q104.8 1328.6 107.8 1328.3 Q110.3 1328.2 112.6 1330.6 M117.9 1330.4 Q120.8 1328.2 123.6 1328.6 Q125.8 1329.6 124.6 1331.6 L120.2 1334.2 M109.6 1332.6 Q111.9 1336 111.1 1341.2 Q108.6 1345.2 108.9 1347.1 Q110 1348.6 112.4 1347.8 M119.6 1334.2 V1338.8"/>
<path d="M116.4 1343 L121.5 1348.4 L130 1339.3"/>
</g>
<rect x="2032" y="1319" width="70" height="35" fill="#E0E0E0"/>
<g fill="none" stroke="#242424" stroke-width="1.7">
<rect x="2055.8" y="1325.8" width="21.3" height="20.8"/><path d="M2063 1325.8 V1346.6 M2070 1325.8 V1346.6 M2055.8 1332.8 H2077.1 M2055.8 1339.6 H2077.1"/>
<rect x="2126" y="1325.8" width="22.3" height="20.8"/><rect x="2131" y="1329.2" width="12.5" height="14"/><path d="M2133.8 1332.6 H2140.6 M2133.8 1336 H2140.6 M2133.8 1339.4 H2140.6"/>
<rect x="2195.8" y="1325.8" width="22.3" height="20.8"/><path d="M2195.8 1338 H2209.6 V1325.8 M2202.6 1325.8 V1338"/>
</g>
<path d="M2253 1337 H2265" stroke="#555" stroke-width="1.5"/>
<path d="M2277 1337 H2450" stroke="#666" stroke-width="1.5"/>
<path d="M2363 1332 V1342" stroke="#666" stroke-width="1.5"/>
<rect x="2376" y="1328" width="8.5" height="19" fill="#666"/>
<path d="M2461 1337 H2473 M2467 1331 V1343" stroke="#555" stroke-width="1.5"/>
</svg>
<div class="t" style="left:2496px;top:1328.92px;font-size:19px;color:#242424;letter-spacing:-0.719px;">160 %</div>
<svg style="left:0;top:0" width="1" height="1"><g fill="none" stroke="#107C41" stroke-width="3.2">
<path d="M112.5 362 V533.5 H222"/>
<path d="M1381.5 344 V516 H1491"/>
<path d="M1008.4 833.2 H1160"/>
<path d="M184 1266 V1103.7 H294"/>
</g><g fill="#107C41">
<circle cx="112.5" cy="362" r="15.6"/>
<circle cx="1381.3" cy="344.3" r="15.6"/>
<circle cx="1008.4" cy="833.2" r="15.6"/>
<circle cx="184.3" cy="1266" r="15.6"/>
</g></svg>
<div class="a" style="left:220px;top:466px;width:650px;height:140px;background:#B5DFC9;border:3px solid #107C41;border-radius:14px"></div>
<div class="a" style="left:1489px;top:448px;width:504px;height:140px;background:#B5DFC9;border:3px solid #107C41;border-radius:14px"></div>
<div class="a" style="left:1158px;top:765px;width:527px;height:140px;background:#B5DFC9;border:3px solid #107C41;border-radius:14px"></div>
<div class="a" style="left:292px;top:1035px;width:558px;height:140px;background:#B5DFC9;border:3px solid #107C41;border-radius:14px"></div>
<div class="t" style="left:244.5px;top:485.89px;font-size:26px;color:#107C41;letter-spacing:0.338px;font-weight:bold;">Поле ім’я.</div>
<div class="t" style="left:385.6px;top:485.89px;font-size:26px;color:#107C41;letter-spacing:1.444px;">Відображає ім’я поточної клітинки.</div>
<div class="t" style="left:244.5px;top:518.09px;font-size:26px;color:#107C41;letter-spacing:1.546px;">Використовується для швидкого виділення</div>
<div class="t" style="left:244.5px;top:549.89px;font-size:26px;color:#107C41;letter-spacing:1.286px;">клітинок або їх діапазонів.</div>
<div class="t" style="left:1513px;top:468.19px;font-size:26px;color:#107C41;letter-spacing:0.877px;font-weight:bold;">Рядок формул.</div>
<div class="t" style="left:1729.6px;top:468.19px;font-size:26px;color:#107C41;letter-spacing:0.891px;">Вміщує: поле ім’я,</div>
<div class="t" style="left:1513px;top:500.29px;font-size:26px;color:#107C41;letter-spacing:1.471px;">вміст клітинки та функціональну</div>
<div class="t" style="left:1513px;top:532.39px;font-size:26px;color:#107C41;letter-spacing:1.635px;">кнопку майстра функцій.</div>
<div class="t" style="left:1182.3px;top:785.69px;font-size:26px;color:#107C41;letter-spacing:0.677px;font-weight:bold;">Ім’я клітинки.</div>
<div class="t" style="left:1374.1px;top:785.69px;font-size:26px;color:#107C41;letter-spacing:1.111px;">Складається з літери</div>
<div class="t" style="left:1182.3px;top:817.29px;font-size:26px;color:#107C41;letter-spacing:1.552px;">(назва стовпчика) та цифри (номер</div>
<div class="t" style="left:1182.3px;top:848.89px;font-size:26px;color:#107C41;letter-spacing:1.147px;">рядка).</div>
<div class="t" style="left:316px;top:1054.89px;font-size:26px;color:#107C41;letter-spacing:1.002px;font-weight:bold;">Рядок ярликів аркушів.</div>
<div class="t" style="left:647.7px;top:1054.89px;font-size:26px;color:#107C41;letter-spacing:1.062px;">Максимальна</div>
<div class="t" style="left:316px;top:1086.49px;font-size:26px;color:#107C41;letter-spacing:1.447px;">кількість аркушів, що вміщується в</div>
<div class="t" style="left:316px;top:1119.19px;font-size:26px;color:#107C41;letter-spacing:1.614px;">електрону книгу дорівнює 255.</div>
</div>
</body></html>
